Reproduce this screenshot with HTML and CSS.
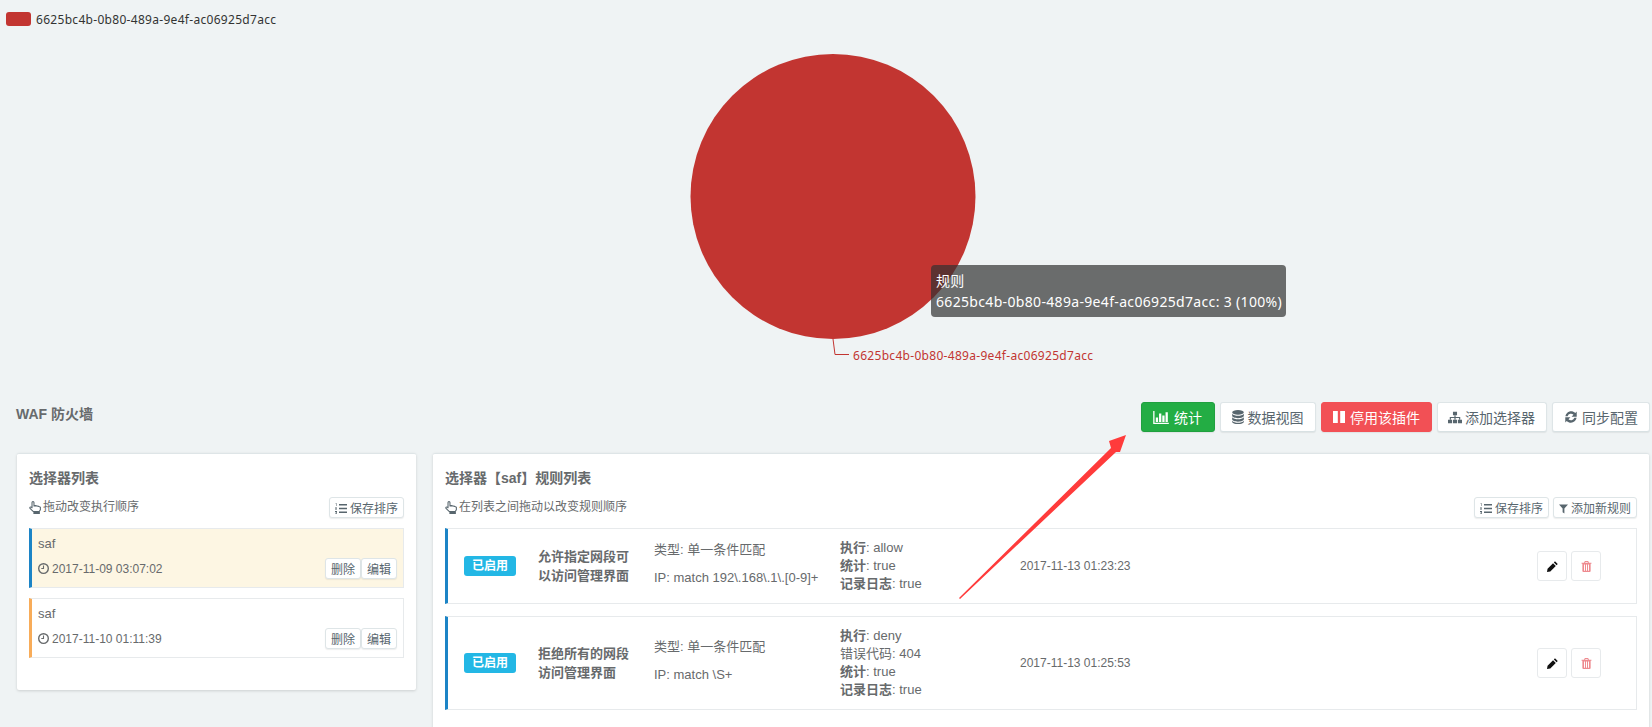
FILE: index.html
```html
<!DOCTYPE html>
<html lang="zh-CN">
<head>
    <meta charset="UTF-8">
    <title>WAF 防火墙</title>
    <link rel="stylesheet" href="styles.css">
</head>
<body>
<svg class="icon-defs" width="0" height="0">
    <symbol id="i-chart" viewBox="0 0 24 20"><path d="M0 0h2v18h22v2H0z"/><path d="M4 10h3.500v7H4zM9 4h3.500v13H9zM14 7h3.500v10H14zM19 2h3.500v15H19z"/></symbol>
    <symbol id="i-database" viewBox="0 0 20 24"><ellipse cx="10" cy="4" rx="10" ry="4"/><path d="M0 6.500C2 9 6 10 10 10s8-1 10-3.500V10c0 2.200-4.500 4-10 4S0 12.200 0 10zM0 12.500C2 15 6 16 10 16s8-1 10-3.500V16c0 2.200-4.500 4-10 4S0 18.200 0 16zM0 18.500C2 21 6 22 10 22s8-1 10-3.500V20c0 2.200-4.500 4-10 4S0 22.200 0 20z"/></symbol>
    <symbol id="i-pause" viewBox="0 0 20 20"><path d="M0 0h8v20H0zM12 0h8v20h-8z"/></symbol>
    <symbol id="i-sitemap" viewBox="0 0 24 20"><path d="M8.500 0h7v6h-7zM0 14h7v6H0zM8.500 14h7v6h-7zM17 14h7v6h-7z"/><path d="M11 6h2v3h8v5h-2v-3h-6v3h-2v-3H5v3H3V9h8z"/></symbol>
    <symbol id="i-refresh" viewBox="1 1 22 22"><path d="M12 1.500c3 0 5.800 1.200 7.800 3.200L22.500 2v9.500H13l3.600-3.600A6.600 6.600 0 0 0 5.800 10.500H1.800C2.700 5.500 7 1.500 12 1.500zM1.500 12.500H11l-3.600 3.600a6.600 6.600 0 0 0 10.800-2.600h4c-.9 5-5.200 9-10.200 9-3 0-5.800-1.200-7.800-3.200L1.500 22z"/></symbol>
    <symbol id="i-list" viewBox="0 0 24 22"><path d="M8 2h16v3H8zM8 9.500h16v3H8zM8 17h16v3H8z"/><path d="M1 1h3v5H3V2H1zM0 9h4v1.500L2 12h2v1H0v-1.500L2.500 10H0zM0 16h4v6H0v-1h3v-1H1v-1h2v-1H0z"/></symbol>
    <symbol id="i-filter" viewBox="0 0 20 20"><path d="M0 0h20l-8 9v11l-4-3V9z"/></symbol>
    <symbol id="i-hand" viewBox="0 0 22 24"><path fill="none" stroke="currentColor" stroke-width="2" stroke-linejoin="round" d="M5.500 12.500V2.800a1.800 1.800 0 0 1 3.600 0V9l2.800-.5 3 .6 3 .8 3 1.600V16l-2 3.500H8L1.800 13.800c-1.500-1.800 1-3.800 3-2z"/><path d="M8 20h12v4H8z"/></symbol>
    <symbol id="i-clock" viewBox="0 0 20 20"><path fill-rule="evenodd" d="M10 0a10 10 0 1 1 0 20 10 10 0 0 1 0-20zm0 2.500a7.500 7.500 0 1 0 0 15 7.500 7.500 0 0 0 0-15z"/><path d="M9 4.500h2v6.500H6V9.200h3z"/></symbol>
    <symbol id="i-pencil" viewBox="0 0 20 20"><path d="M14.500 0.500l5 5-2 2-5-5zM11 4l5 5L6 19l-6 1 1-6z"/></symbol>
    <symbol id="i-trash" viewBox="0 0 18 20"><path fill-rule="evenodd" d="M6 0h6l1.500 3H18v2h-1.500v13a2 2 0 0 1-2 2h-11a2 2 0 0 1-2-2V5H0V3h4.500zM4.500 6.500v11h1.800v-11zM8.100 6.500v11h1.800v-11zM11.700 6.500v11h1.800v-11zM7 1.800 6.500 3h5L11 1.800z"/></symbol>
</svg>

<div class="page">
    <!-- pie chart -->
    <div class="chart">
        <svg class="chart-svg" width="1652" height="402">
            <rect x="6" y="12" width="25" height="14" rx="3" fill="#c23531"/>
            <text class="legend-text" x="36" y="24">6625bc4b-0b80-489a-9e4f-ac06925d7acc</text>
            <circle cx="833" cy="196.500" r="142.500" fill="#c23531"/>
            <path d="M833 339L835 354.500H849" fill="none" stroke="#c23531"/>
            <text class="label-text" x="853" y="360">6625bc4b-0b80-489a-9e4f-ac06925d7acc</text>
        </svg>
        <div class="chart-tip">
            规则<br>
            6625bc4b-0b80-489a-9e4f-ac06925d7acc: 3 (100%)
        </div>
    </div>

    <div class="page-head">
        <h1 class="page-title">WAF 防火墙</h1>
        <div class="head-btns">
            <button class="btn btn-green"><svg class="ico ico-chart"><use href="#i-chart"/></svg>统计</button>
            <button class="btn"><svg class="ico ico-db"><use href="#i-database"/></svg>数据视图</button>
            <button class="btn btn-red"><svg class="ico ico-pause"><use href="#i-pause"/></svg>停用该插件</button>
            <button class="btn"><svg class="ico ico-map"><use href="#i-sitemap"/></svg>添加选择器</button>
            <button class="btn"><svg class="ico ico-sync"><use href="#i-refresh"/></svg>同步配置</button>
        </div>
    </div>

    <div class="columns">
        <!-- selectors -->
        <div class="panel panel-left">
            <h2 class="panel-title">选择器列表</h2>
            <div class="tools">
                <span class="hint"><svg class="ico-hand"><use href="#i-hand"/></svg>拖动改变执行顺序</span>
                <button class="btn-xs"><svg class="ico-xs"><use href="#i-list"/></svg>保存排序</button>
            </div>
            <div class="sel sel-active">
                <div class="sel-name">saf</div>
                <div class="sel-row">
                    <span class="sel-time"><svg class="ico-clock"><use href="#i-clock"/></svg>2017-11-09 03:07:02</span>
                    <span><button class="btn-xs">删除</button><button class="btn-xs">编辑</button></span>
                </div>
            </div>
            <div class="sel sel-orange">
                <div class="sel-name">saf</div>
                <div class="sel-row">
                    <span class="sel-time"><svg class="ico-clock"><use href="#i-clock"/></svg>2017-11-10 01:11:39</span>
                    <span><button class="btn-xs">删除</button><button class="btn-xs">编辑</button></span>
                </div>
            </div>
        </div>

        <!-- rules -->
        <div class="panel panel-right">
            <h2 class="panel-title">选择器【saf】规则列表</h2>
            <div class="tools">
                <span class="hint"><svg class="ico-hand"><use href="#i-hand"/></svg>在列表之间拖动以改变规则顺序</span>
                <span class="tool-btns">
                    <button class="btn-xs"><svg class="ico-xs"><use href="#i-list"/></svg>保存排序</button>
                    <button class="btn-xs"><svg class="ico-xs ico-funnel"><use href="#i-filter"/></svg>添加新规则</button>
                </span>
            </div>

            <div class="rule">
                <div><span class="badge">已启用</span></div>
                <div class="rule-name">允许指定网段可<br>以访问管理界面</div>
                <div class="rule-cond">
                    <p>类型: 单一条件匹配</p>
                    <p>IP: match 192\.168\.1\.[0-9]+</p>
                </div>
                <div class="rule-meta">
                    <div><b>执行</b>: allow</div>
                    <div><b>统计</b>: true</div>
                    <div><b>记录日志</b>: true</div>
                </div>
                <div class="rule-time">2017-11-13 01:23:23</div>
                <div class="rule-actions">
                    <button class="btn-icon"><svg class="ico-sq"><use href="#i-pencil"/></svg></button>
                    <button class="btn-icon btn-icon-del"><svg class="ico-sq"><use href="#i-trash"/></svg></button>
                </div>
            </div>

            <div class="rule">
                <div><span class="badge">已启用</span></div>
                <div class="rule-name">拒绝所有的网段<br>访问管理界面</div>
                <div class="rule-cond">
                    <p>类型: 单一条件匹配</p>
                    <p>IP: match \S+</p>
                </div>
                <div class="rule-meta">
                    <div><b>执行</b>: deny</div>
                    <div>错误代码: 404</div>
                    <div><b>统计</b>: true</div>
                    <div><b>记录日志</b>: true</div>
                </div>
                <div class="rule-time">2017-11-13 01:25:53</div>
                <div class="rule-actions">
                    <button class="btn-icon"><svg class="ico-sq"><use href="#i-pencil"/></svg></button>
                    <button class="btn-icon btn-icon-del"><svg class="ico-sq"><use href="#i-trash"/></svg></button>
                </div>
            </div>
        </div>
    </div>

    <!-- annotation arrow drawn over the page -->
    <svg class="arrow" width="1652" height="727">
        <polygon points="959,598 1111,448 1109,441 1126,435 1120,452 1116,452 960,599" fill="#ff3b3b"/>
    </svg>
</div>
</body>
</html>
```

FILE: styles.css
```css
html, body {
    margin: 0;
    padding: 0;
    height: 100%;
    overflow: hidden;
}
body {
    background-color: #eff3f4;
    color: #676a6c;
    font-family: "Liberation Sans", "Noto Sans CJK SC", sans-serif;
    font-size: 13px;
}
.icon-defs {
    position: absolute;
}
.page {
    position: relative;
    height: 727px;
    overflow: hidden;
}

/* chart */
.chart {
    position: relative;
    height: 402px;
}
.chart-svg {
    display: block;
}
.legend-text,
.label-text {
    font-family: "Noto Sans", "Noto Sans CJK SC", sans-serif;
    font-size: 12px;
    letter-spacing: 0.3px;
}
.legend-text {
    fill: #333;
}
.label-text {
    fill: #c23531;
}
.chart-tip {
    position: absolute;
    left: 931px;
    top: 265px;
    padding: 5px 4px 5px 5px;
    background: rgba(50, 50, 50, 0.7);
    border-radius: 4px;
    color: #fff;
    font-family: "Noto Sans", "Noto Sans CJK SC", sans-serif;
    font-size: 14px;
    letter-spacing: 0.33px;
    line-height: 21px;
    white-space: nowrap;
}

/* head */
.page-head {
    display: flex;
    justify-content: space-between;
    align-items: flex-start;
    padding: 0 2px 0 16px;
    margin-bottom: 21px;
}
.page-title {
    margin: 0;
    font-size: 14px;
    line-height: 24px;
}
.head-btns {
    display: flex;
    gap: 5px;
}
.btn {
    display: flex;
    align-items: center;
    height: 30px;
    padding: 0 11px;
    background: #fff;
    border: 1px solid #dee5e7;
    border-bottom-color: #d8e1e3;
    border-radius: 3px;
    box-shadow: 0 1px 1px rgba(90, 90, 90, 0.1);
    color: #58666e;
    font-family: inherit;
    font-size: 14px;
}
.btn-green {
    padding: 0 11.500px;
    background: #23ad44;
    border-color: #20a03f;
    color: #fff;
}
.btn-red {
    background: #f25055;
    border-color: #f25055;
    color: #fff;
}
.ico {
    width: 12px;
    height: 13px;
    margin-right: 4px;
    fill: currentColor;
}
.ico-chart {
    width: 16px;
    margin-right: 5px;
}
.ico-db {
    height: 14px;
}
.ico-pause {
    height: 12px;
    margin-right: 5.500px;
}
.ico-map {
    width: 14px;
    margin: 0 3px 0 -1px;
}
.ico-sync {
    height: 12px;
    margin: 0 5px 0 1px;
}

/* panels */
.columns {
    display: flex;
    gap: 17px;
    padding: 0 3px 0 17px;
    align-items: flex-start;
}
.panel {
    box-sizing: border-box;
    background: #fff;
    border-top: 1px solid #dee5e7;
    box-shadow: 0 1px 3px rgba(0, 0, 0, 0.15);
    border-radius: 2px;
    padding: 14px 12px 32px;
}
.panel-left {
    width: 399px;
}
.panel-right {
    flex: 1;
}
.panel-title {
    margin: 0 0 9px;
    font-size: 14px;
    line-height: 20px;
}
.tools {
    display: flex;
    justify-content: space-between;
    align-items: flex-start;
    margin-bottom: 10px;
}
.hint {
    display: flex;
    align-items: center;
    font-size: 12px;
    line-height: 20px;
}
.ico-hand {
    width: 12px;
    height: 13px;
    margin-right: 2px;
    fill: currentColor;
    color: #58666e;
}
.tool-btns {
    display: flex;
    gap: 4px;
}
.btn-xs {
    height: 21px;
    padding: 0 5px;
    background: #fff;
    border: 1px solid #dee5e7;
    border-radius: 3px;
    box-shadow: 0 1px 1px rgba(90, 90, 90, 0.1);
    color: #58666e;
    font-family: inherit;
    font-size: 12px;
    vertical-align: top;
}
.ico-xs {
    width: 12px;
    height: 11px;
    margin-right: 3px;
    fill: currentColor;
    vertical-align: -1px;
}
.ico-funnel {
    width: 9px;
    height: 10px;
}

/* selector items */
.sel {
    height: 60px;
    box-sizing: border-box;
    margin-bottom: 10px;
    padding: 6px 6px 0;
    border: 1px solid #e7eaec;
    border-left: 3px solid #1c84c6;
}
.sel:last-child {
    margin-bottom: 0;
}
.sel-active {
    background: #fdf6e3;
}
.sel-orange {
    border-left-color: #f8ac59;
}
.sel-name {
    margin-bottom: 5px;
    line-height: 18px;
    font-size: 13px;
}
.sel-row {
    display: flex;
    justify-content: space-between;
    align-items: center;
    font-size: 12px;
}
.sel-time {
    display: flex;
    align-items: center;
}
.ico-clock {
    width: 11px;
    height: 11px;
    margin-right: 3px;
    fill: currentColor;
}

/* rules */
.rule {
    display: grid;
    grid-template-columns: 74px 116px 186px 180px 1fr auto;
    align-items: center;
    box-sizing: border-box;
    margin-bottom: 12px;
    padding: 10px 35px 10px 16px;
    border: 1px solid #e7eaec;
    border-left: 3px solid #1c84c6;
}
.badge {
    display: block;
    width: 52px;
    height: 20px;
    background: #23b7e5;
    border-radius: 3px;
    color: #fff;
    font-size: 12px;
    font-weight: bold;
    line-height: 20px;
    text-align: center;
}
.rule-name {
    font-weight: bold;
    line-height: 19px;
}
.rule-cond {
    padding-bottom: 4px;
}
.rule-cond p {
    margin: 0;
    line-height: 18px;
}
.rule-cond p + p {
    margin-top: 10px;
}
.rule-meta {
    line-height: 18px;
}
.rule-time {
    font-size: 12px;
}
.rule-actions {
    display: flex;
    gap: 4px;
}
.btn-icon {
    width: 30px;
    height: 30px;
    padding: 0;
    background: #fff;
    border: 1px solid #e7eaec;
    border-radius: 3px;
    color: #111;
}
.btn-icon-del {
    color: #ee8a8f;
}
.ico-sq {
    display: block;
    width: 11px;
    height: 11px;
    margin: auto;
    fill: currentColor;
}

/* annotation */
.arrow {
    position: absolute;
    left: 0;
    top: 0;
    pointer-events: none;
}
```
